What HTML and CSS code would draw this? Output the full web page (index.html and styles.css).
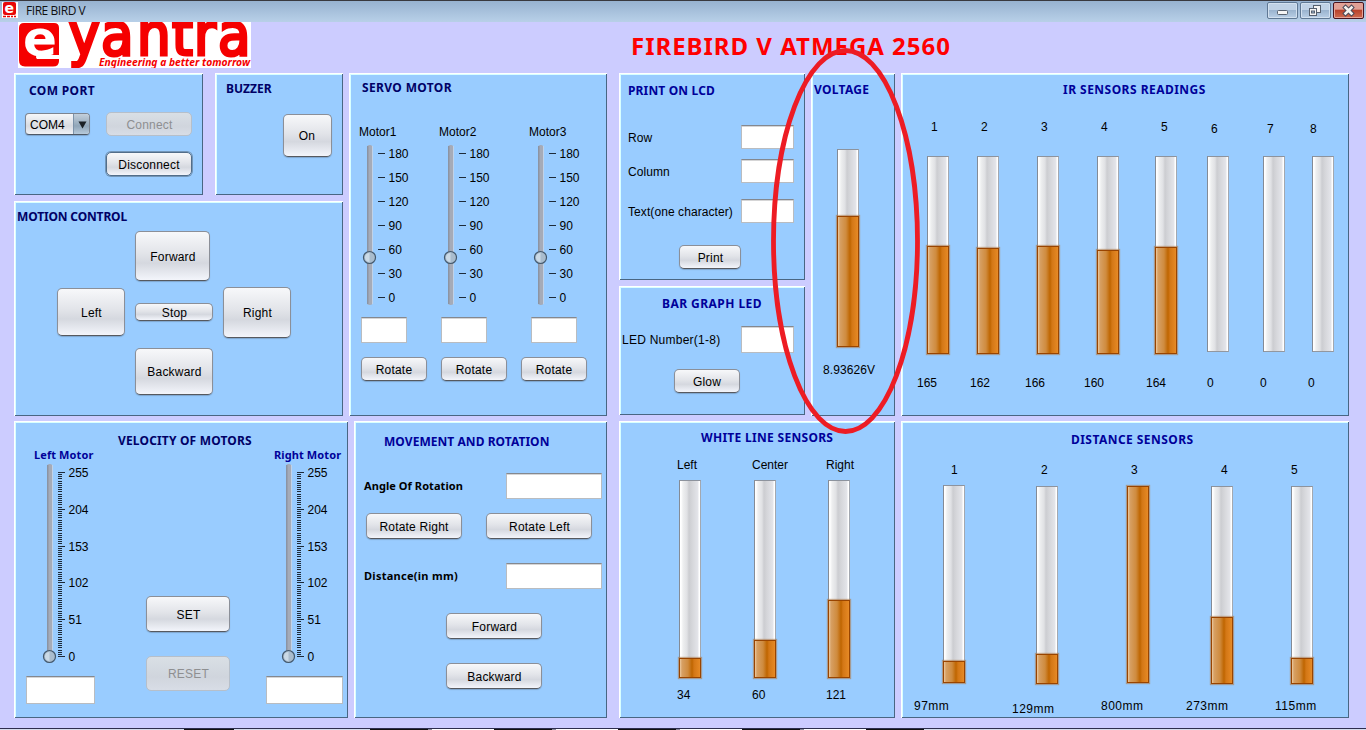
FILE: index.html
```html
<!DOCTYPE html>
<html lang="en">
<head>
<meta charset="utf-8">
<title>FIRE BIRD V</title>
<link rel="stylesheet" href="styles.css">
</head>
<body>
<header class="titlebar">
  <svg class="app-icon" width="16" height="16" viewBox="0 0 16 16"><rect width="16" height="16" fill="#fff"/><rect x="1" width="13" height="13" rx="2" fill="#e80808"/><text x="2.6" y="10.5" class="icon-e">e</text><path d="M1 14.5h3m1 0h3m1 0h2m1 0h2" stroke="#e80808" stroke-width="1.5"/></svg>
  <span class="app-name">FIRE BIRD V</span>
  <div class="win-buttons">
    <div class="win-btn"><svg width="29" height="15"><rect x="9.5" y="7.5" width="10" height="4" rx="1" fill="#f4f4f4" stroke="#56606e"/></svg></div>
    <div class="win-btn"><svg width="29" height="15"><g fill="#f4f4f4" stroke="#56606e"><rect x="12.5" y="2.500" width="7" height="7"/><rect x="8.500" y="5.500" width="7" height="7"/></g><rect x="10.500" y="8" width="3" height="2" fill="#9db7d2" stroke="#56606e"/></svg></div>
    <div class="win-btn close"><svg width="29" height="15"><path d="M11.500 4.500l6 6m0-6l-6 6" stroke="#4c4a58" stroke-width="4.600" stroke-linecap="square"/><path d="M11.500 4.500l6 6m0-6l-6 6" stroke="#f6f2ee" stroke-width="2.600" stroke-linecap="square"/></svg></div>
  </div>
</header>

<div class="banner">
  <svg class="logo" width="233" height="46" viewBox="0 0 233 46">
    <rect width="233" height="46" fill="#fff"/>
    <path d="M6 1H36Q41 1 41 6V33H19Q17 35 19 37H41V39Q41 44.500 35 44.500H7Q1 44.500 1 38V6Q1 1 6 1Z" fill="#f50000"/>
    <text x="5" y="34" class="logo-e" textLength="34" lengthAdjust="spacingAndGlyphs">e</text>
    <text x="50.500 83 119 154 176 200" y="33" class="logo-word">yantra</text>
    <rect x="80" y="36" width="153" height="10" fill="#fff"/>
    <text x="81" y="44" class="logo-tag" textLength="151" lengthAdjust="spacingAndGlyphs">Engineering a better tomorrow</text>
  </svg>
  <h1>FIREBIRD V ATMEGA 2560</h1>
</div>

<main>
  <section class="half left-half">
    <div class="row top-row">
      <div class="stack">
        <div class="row port-row">
          <div class="panel com">
            <h2>COM PORT</h2>
            <div class="com-grid">
              <div class="combo"><span>COM4</span><i><svg width="9" height="8"><path d="M0.500 0.500h8l-4 7z" fill="#1c2126"/></svg></i></div>
              <button disabled>Connect</button>
              <button class="focused">Disconnect</button>
            </div>
          </div>
          <div class="panel buzzer"><h2>BUZZER</h2><button>On</button></div>
        </div>
        <div class="panel motion">
          <h2>MOTION CONTROL</h2>
          <div class="pad">
            <button class="fwd">Forward</button>
            <button class="lft">Left</button>
            <button class="stp">Stop</button>
            <button class="rgt">Right</button>
            <button class="bck">Backward</button>
          </div>
        </div>
      </div>
      <div class="panel servo">
        <h2>SERVO MOTOR</h2>
        <div class="motors">
          <div class="motor m1"><label>Motor1</label><svg class="slider" data-labels="180,150,120,90,60,30,0" data-step="24" data-value="114" width="60" height="164"></svg><input><button>Rotate</button></div>
          <div class="motor m2"><label>Motor2</label><svg class="slider" data-labels="180,150,120,90,60,30,0" data-step="24" data-value="114" width="60" height="164"></svg><input><button>Rotate</button></div>
          <div class="motor m3"><label>Motor3</label><svg class="slider" data-labels="180,150,120,90,60,30,0" data-step="24" data-value="114" width="60" height="164"></svg><input><button>Rotate</button></div>
        </div>
      </div>
    </div>
    <div class="row bottom-row">
      <div class="panel velocity">
        <h2>VELOCITY OF MOTORS</h2>
        <div class="wheels">
          <div class="wheel wl"><h3>Left Motor</h3><svg class="slider" data-labels="255,204,153,102,51,0" data-step="36.8" data-minor="85" data-value="193" width="60" height="204"></svg><input></div>
          <div class="wheel-actions"><button>SET</button><button class="odd" disabled>RESET</button></div>
          <div class="wheel wr"><h3>Right Motor</h3><svg class="slider" data-labels="255,204,153,102,51,0" data-step="36.8" data-minor="85" data-value="193" width="60" height="204"></svg><input></div>
        </div>
      </div>
      <div class="panel movement">
        <h2>MOVEMENT AND ROTATION</h2>
        <div class="field angle"><label>Angle Of Rotation</label><input></div>
        <div class="turns"><button>Rotate Right</button><button>Rotate Left</button></div>
        <div class="field travel"><label>Distance(in mm)</label><input></div>
        <div class="go"><button>Forward</button><button>Backward</button></div>
      </div>
    </div>
  </section>

  <section class="half right-half">
    <div class="row top-row">
      <div class="stack">
        <div class="panel lcd">
          <h2>PRINT ON LCD</h2>
          <div class="field"><label>Row</label><input></div>
          <div class="field"><label>Column</label><input></div>
          <div class="field char"><label>Text(one character)</label><input></div>
          <button>Print</button>
        </div>
        <div class="panel led">
          <h2>BAR GRAPH LED</h2>
          <div class="field"><label>LED Number(1-8)</label><input></div>
          <button>Glow</button>
        </div>
      </div>
      <div class="panel voltage">
        <h2>VOLTAGE</h2>
        <div class="gauge"><div class="bar"><div class="fill" style="height:131px"></div></div><output>8.93626V</output></div>
      </div>
      <div class="panel ir">
        <h2>IR SENSORS READINGS</h2>
        <div class="gauges">
          <div class="gauge"><label>1</label><div class="bar"><div class="fill" style="height:108px"></div></div><output>165</output></div>
          <div class="gauge"><label>2</label><div class="bar"><div class="fill" style="height:106px"></div></div><output>162</output></div>
          <div class="gauge"><label>3</label><div class="bar"><div class="fill" style="height:108px"></div></div><output>166</output></div>
          <div class="gauge"><label>4</label><div class="bar"><div class="fill" style="height:104px"></div></div><output>160</output></div>
          <div class="gauge"><label>5</label><div class="bar"><div class="fill" style="height:107px"></div></div><output>164</output></div>
          <div class="gauge empty"><label>6</label><div class="bar"></div><output>0</output></div>
          <div class="gauge empty"><label>7</label><div class="bar"></div><output>0</output></div>
          <div class="gauge empty"><label>8</label><div class="bar"></div><output>0</output></div>
        </div>
      </div>
    </div>
    <div class="row bottom-row">
      <div class="panel white-line">
        <h2>WHITE LINE SENSORS</h2>
        <div class="gauges">
          <div class="gauge"><label>Left</label><div class="bar"><div class="fill" style="height:20px"></div></div><output>34</output></div>
          <div class="gauge"><label>Center</label><div class="bar"><div class="fill" style="height:38px"></div></div><output>60</output></div>
          <div class="gauge"><label>Right</label><div class="bar"><div class="fill" style="height:78px"></div></div><output>121</output></div>
        </div>
      </div>
      <div class="panel distance">
        <h2>DISTANCE SENSORS</h2>
        <div class="gauges">
          <div class="gauge"><label>1</label><div class="bar"><div class="fill" style="height:22px"></div></div><output>97mm</output></div>
          <div class="gauge"><label>2</label><div class="bar"><div class="fill" style="height:30px"></div></div><output>129mm</output></div>
          <div class="gauge"><label>3</label><div class="bar"><div class="fill" style="height:197px"></div></div><output>800mm</output></div>
          <div class="gauge"><label>4</label><div class="bar"><div class="fill" style="height:67px"></div></div><output>273mm</output></div>
          <div class="gauge"><label>5</label><div class="bar"><div class="fill" style="height:26px"></div></div><output>115mm</output></div>
        </div>
      </div>
    </div>
  </section>
</main>

<footer class="edge"><i class="s1"></i><i class="s2"></i><i class="s3"></i><i class="s4"></i></footer>

<svg class="callout" width="152" height="390"><ellipse cx="74.500" cy="194" rx="72" ry="190.500" fill="none" stroke="#ed1c24" stroke-width="4.800"/></svg>
<script src="sliders.js"></script>
</body>
</html>
```
FILE: styles.css
```css
* { box-sizing: border-box; }

body {
  margin: 0;
  width: 1366px;
  height: 730px;
  overflow: hidden;
  display: flex;
  flex-direction: column;
  position: relative;
  background: #ccccff;
  color: #000;
  font: 12px/16px "Liberation Sans", Arial, sans-serif;
  white-space: nowrap;
}

h1, h2, h3 { margin: 0; font-family: "Noto Sans", "Open Sans", sans-serif; font-weight: bold; }
h2 { font-size: 12px; line-height: 18px; height: 16px; color: #000099; }
h3 { font-size: 11px; line-height: 16px; color: #000099; }
label, output { display: block; height: 16px; }

/* window frame */
.titlebar {
  height: 22px;
  display: flex;
  align-items: flex-start;
  padding: 2px 2px 0 2px;
  background: linear-gradient(#97b2d0, #b8d0e8);
  border-top: 1px solid #39393f;
}
.titlebar .app-icon { margin-top: -1px; }
.icon-e { font: bold 14px "DejaVu Sans", sans-serif; fill: #fff; }
.app-name { margin: 0 auto 0 8px; font: 12px/16px "Open Sans", "Noto Sans", sans-serif; letter-spacing: -.45px; color: #111; }
.win-buttons { display: flex; gap: 2px; margin-top: -1px; }
.win-btn {
  width: 31px; height: 17px;
  border: 1px solid #5f7894;
  border-radius: 2px;
  box-shadow: inset 0 0 0 1px #d2e0ef;
  background: linear-gradient(#bfd1e5 0 45%, #9bb4cf 50%, #b9cfe6);
}
.win-btn svg { display: block; }
.win-btn.close { border-color: #48141f; box-shadow: inset 0 0 0 1px #e5a296; background: linear-gradient(#e0a095 0 40%, #b9432c 50%, #cf6b50); }

.banner { height: 51px; display: flex; padding-left: 18px; }
.logo-e { font: bold 50px "DejaVu Sans", sans-serif; fill: #fff; }
.logo-word { font: 59px "DejaVu Sans Condensed", "DejaVu Sans", sans-serif; fill: #f50000; stroke: #f50000; stroke-width: 3px; }
.logo-tag { font: italic bold 11px "Noto Sans", sans-serif; fill: #f50000; }
.banner h1 { margin: 7px 0 0 380px; font-size: 24px; line-height: 34px; letter-spacing: .98px; color: #ff0000; }

/* dashboard skeleton */
main { height: 645px; display: flex; gap: 12px; padding-left: 14px; }
.half { display: flex; flex-direction: column; gap: 5px; }
.left-half { width: 593px; }
.right-half { width: 730px; }
.row { display: flex; gap: 6px; }
.top-row { height: 343px; }
.bottom-row { height: 297px; }
.stack { display: flex; flex-direction: column; gap: 6px; }
.port-row { gap: 12px; }
.panel {
  background: #99ccff;
  box-shadow: inset 1px 1px #fff, inset -1px -1px #496683, inset 2px 2px #d8ffff;
}

/* controls */
button {
  display: block;
  margin: 0; padding: 1px 0 0 1px;
  border: 1px solid #8b8f98;
  border-bottom-color: #56595f;
  border-radius: 5px;
  font: 12px/14px "Liberation Sans", Arial, sans-serif;
  letter-spacing: .2px;
  color: #000;
  background: linear-gradient(#f7f8fa, #e2e4e9 45%, #d5d8df 65%, #f3f5fb);
  box-shadow: 0 1px 1px #7fa6ce;
}
button.odd { padding-top: 0; }
button:disabled { color: #8e8f91; border-color: #b6bfca; background: linear-gradient(#d9dfe5, #d0d5dd 60%, #d8dde6); box-shadow: none; }
button.focused { padding-left: 0; border-color: #526d89; box-shadow: 0 0 0 1px #7396b8; }
input {
  display: block; padding: 0;
  border: 1px solid #b9bcc0;
  border-top-color: #84888f;
  border-radius: 0;
  background: #fff;
  box-shadow: inset 0 1px #d5d5d6;
}
.field { display: flex; justify-content: space-between; align-items: center; }
.combo {
  display: flex; width: 65px; height: 22px; margin-top: 1px;
  border: 1px solid #7d8591; border-bottom-color: #4e5866; border-radius: 4px; overflow: hidden;
  background: linear-gradient(#f6f7f9, #d8dbe1 60%, #f0f2f7);
  box-shadow: 0 1px 1px #7fa6ce;
}
.combo span { flex: 1; padding: 3px 0 0 4px; line-height: 16px; }
.combo i { width: 16px; padding: 7px 0 0 4px; border-left: 1px solid #7d93aa; background: linear-gradient(#c3cfdb, #90a5b8 60%, #b7cadb); }
.combo svg { display: block; }

.com, .buzzer { height: 122px; }
.com { width: 189px; padding: 9px 11px; }
.com h2 { margin-left: 4px; letter-spacing: .35px; }
.com h2, .buzzer h2, .motion h2, .servo h2, .velocity h2 { color: #000066; }
.com-grid { display: grid; grid-template: 24px 24px / 65px 86px; gap: 16px; margin-top: 14px; }
.com-grid .focused { grid-column: 2; }
.buzzer { width: 128px; padding: 7px 11px; }
.buzzer button { width: 49px; height: 43px; margin: 18px 0 0 57px; padding: 0 1px 0 0; }

.motion { width: 329px; height: 215px; padding: 7px 3px; }
.motion h2 { letter-spacing: -.15px; }
.pad { display: grid; grid-template: 50px 55px 47px / 68px 78px 68px; gap: 6px 10px; margin: 7px 0 0 40px; align-items: start; }
.fwd { grid-column: 2; width: 75px; height: 50px; }
.lft { grid-column: 1; height: 48px; margin-top: 1px; }
.stp { height: 18px; margin-top: 16px; }
.rgt { height: 51px; padding-top: 0; }
.bck { grid-column: 2; height: 47px; padding-top: 0; }

.servo { width: 258px; padding: 6px 12px; }
.servo h2 { margin-left: 1px; letter-spacing: .36px; }
.motors { display: flex; margin-top: 29px; }
.motor { flex: none; width: 80px; }
.motor label { margin-left: -2px; }
.slider { display: block; margin: 3px 0 0 1px; overflow: visible; }
.m2 .slider { margin-left: 2px; }
.m3 label { margin-left: 8px; }
.m3 .slider { margin-left: 12px; }
.motor input { width: 46px; height: 26px; margin-top: 10px; }
.m3 input { margin-left: 10px; }
.motor button { width: 66px; height: 24px; margin-top: 14px; padding-left: 0; }

.velocity { width: 334px; padding: 11px 5px 0 12px; }
.velocity h2 { margin-left: 92px; letter-spacing: .17px; }
.wheels { display: flex; margin-top: -1px; }
.wheel h3 { margin-left: 8px; letter-spacing: .1px; }
.wl { width: 69px; }
.wr { width: 77px; }
.wheel .slider { margin: 0 0 0 16px; }
.wr .slider { margin-left: 15px; }
.wheel input { width: 100%; height: 28px; margin-top: 9px; }
.wheel-actions { width: 84px; margin: 149px 36px 0 51px; display: grid; grid-template-rows: 36px 35px; gap: 24px; align-content: start; }

.movement { width: 253px; padding: 12px 5px 0 10px; }
.movement h2 { margin-left: 20px; letter-spacing: .05px; }
.movement label { font: bold 11px/16px "Noto Sans", "Open Sans", sans-serif; letter-spacing: .07px; }
.movement .travel label { letter-spacing: .27px; }
.movement input { width: 96px; height: 26px; }
.angle { margin-top: 24px; }
.turns { display: flex; gap: 24px; margin: 14px 0 24px 2px; }
.turns button { width: 96px; height: 26px; padding-left: 0; }
.turns button + button { width: 106px; padding-left: 1px; }
.go { display: grid; gap: 24px; margin: 24px 0 0 82px; }
.go button { width: 96px; height: 26px; }

.lcd { width: 186px; height: 207px; padding: 9px 11px 0 9px; }
.lcd input { width: 53px; height: 24px; }
.lcd label { margin-top: 2px; letter-spacing: .08px; }
.lcd h2 { margin-bottom: 27px; letter-spacing: .15px; }
.lcd .field { margin-bottom: 10px; }
.lcd .char { margin: 16px 0 22px; }
.lcd button { width: 62px; height: 24px; margin-left: 51px; }
.led { width: 186px; height: 129px; padding: 9px 11px 0 3px; }
.led h2 { margin: 0 0 15px 40px; letter-spacing: .45px; }
.led input { width: 53px; height: 27px; }
.led label { margin-top: 1px; letter-spacing: .25px; }
.led button { width: 66px; height: 24px; margin: 16px 0 0 52px; padding-left: 0; }

/* gauges */
.gauges { display: grid; }
.gauge label { margin-left: var(--label, -2px); }
.gauge output { margin-left: var(--value, -2px); }
.bar {
  width: 22px; height: 198px;
  display: flex; align-items: flex-end;
  border: 1px solid #a3a8b0; border-left-color: #848b96; border-top-color: #8d939d; border-bottom: 0;
  background: linear-gradient(90deg, #fff 0 1px, #eeeff0 3px, #e0e1e4 7px, #cccdd1 9px, #d5d6da 12px, #e4e5ea 18px, #fff 19px);
}
.fill {
  flex: none; width: 22px; margin: 0 -1px;
  border: 1px solid #994400;
  background: linear-gradient(90deg, #edcaa0 0, #d7a064 2px, #cf8b3e 8px, #bf6500 12px, #d37716 14px, #e38622 19px, #e78d2b 20px);
  box-shadow: 0 0 1px 1px rgba(174, 121, 75, .6);
}
.voltage { width: 84px; padding: 8px 3px; }
.voltage h2 { letter-spacing: .3px; }
.voltage .gauge { --value: -14px; margin: 52px 0 0 23px; letter-spacing: .1px; }
.voltage output { margin-top: 15px; }

.ir { width: 448px; padding-top: 8px; }
.ir h2 { margin-left: 162px; letter-spacing: .47px; }
.ir .gauges { grid-template-columns: 50px 60px 60px 58px 52px 56px 49px 22px; margin: 22px 0 0 26px; }
.ir .gauge { --label: 4px; --value: -10px; }
.ir .bar { margin-top: 21px; }
.ir output { margin-top: 21px; }
.ir .gauge:nth-child(2) { --value: -7px; }
.ir .gauge:nth-child(3) { --value: -12px; }
.ir .gauge:nth-child(4) { --value: -13px; }
.ir .gauge:nth-child(5) { --label: 6px; --value: -9px; }
.ir .gauge:nth-child(6) { --value: 0px; }
.ir .gauge:nth-child(7) { --value: -3px; }
.ir .gauge:nth-child(8) { --label: -2px; --value: -4px; }
.ir .empty label { padding-top: 2px; }
.ir .empty .bar { height: 196px; border-bottom: 1px solid #92979f; }
.ir .empty output { margin-top: 23px; }

.white-line { width: 276px; padding-top: 8px; }
.white-line h2 { margin-left: 82px; letter-spacing: .3px; }
.white-line .gauges { grid-template-columns: 75px 74px 22px; margin: 12px 0 0 60px; }
.white-line .bar { margin: 7px 0 9px; }

.distance { width: 448px; padding-top: 10px; }
.distance h2 { margin-left: 170px; letter-spacing: .45px; }
.distance .gauges { grid-template-columns: 93px 91px 84px 80px 22px; margin: 15px 0 0 42px; }
.distance .gauge { --label: 8px; --value: -29px; }
.distance output { letter-spacing: .5px; }
.distance .bar { margin: 8px 0 14px; }
.distance .gauge:nth-child(1) .bar { margin: 7px 0 15px; }
.distance .gauge:nth-child(2) { --label: 5px; --value: -24px; }
.distance .gauge:nth-child(2) .bar { margin-bottom: 17px; }
.distance .gauge:nth-child(3) { --label: 4px; --value: -26px; }
.distance .gauge:nth-child(3) .bar { height: 197px; margin: 8px 0 15px; }
.distance .gauge:nth-child(4) { --label: 10px; --value: -25px; }
.distance .gauge:nth-child(5) { --label: 0px; --value: -16px; }

/* sliders */
.slider text { font: 12px "Liberation Sans", Arial, sans-serif; }

/* bottom window edge */
.edge { height: 2px; margin-top: 10px; display: flex; border-top: 1px solid #2d2d4e; background: #d5dcec; }
.edge i { height: 1px; }
.s1 { width: 184px; }
.s2 { width: 50px; background: #111; }
.s3 { width: 136px; }
.s4 { width: 554px; background: repeating-linear-gradient(90deg, #111 0 58px, #889 58px 62px, #fff 62px 124px); }

.callout { position: absolute; left: 771px; top: 47px; pointer-events: none; }
```
FILE: sliders.js
```js
// Draws track, tick marks, tick labels and thumb of each vertical slider.
document.querySelectorAll('.slider').forEach(function (svg) {
  var labels = svg.dataset.labels.split(',');
  var step = Number(svg.dataset.step);
  var minor = Number(svg.dataset.minor || 0);
  var y0 = minor ? 9 : 10;
  var span = step * (labels.length - 1);
  var trackEnd = minor ? 196 : 162;
  var trackTop = minor ? 1 : 2;
  var h = trackEnd - trackTop;
  var out = '<rect x="5" y="' + trackTop + '" width="5.500" height="' + h + '" rx="2.500" fill="#a5abb8"/>' +
    '<rect x="5" y="' + (trackTop + 1) + '" width="1.500" height="' + (h - 2) + '" fill="#8c94a3"/>' +
    '<rect x="10" y="' + (trackTop + 1) + '" width="1" height="' + (h - 2) + '" fill="#c0d2e8"/>';
  for (var m = 0; minor && m <= minor; m++) {
    out += '<rect x="16" y="' + (y0 + Math.round(m * span / minor)) + '" width="4" height="1" fill="#1d2a38"/>';
  }
  labels.forEach(function (t, i) {
    var y = y0 + Math.round(i * step);
    out += '<rect x="16" y="' + y + '" width="7" height="1" fill="#1d2a38"/>' +
      '<text x="26.500" y="' + (y + 5) + '">' + t + '</text>';
  });
  var ty = Number(svg.dataset.value) + .5;
  out += '<circle cx="7.500" cy="' + ty + '" r="6" fill="#a9bccd" stroke="#43586c" stroke-width="1.200"/>' +
    '<path d="M7.500 ' + (ty - 4.5) + 'a4.500 4.500 0 0 0 0 9z" fill="#cbdae6"/>';
  svg.innerHTML = out;
});
```
